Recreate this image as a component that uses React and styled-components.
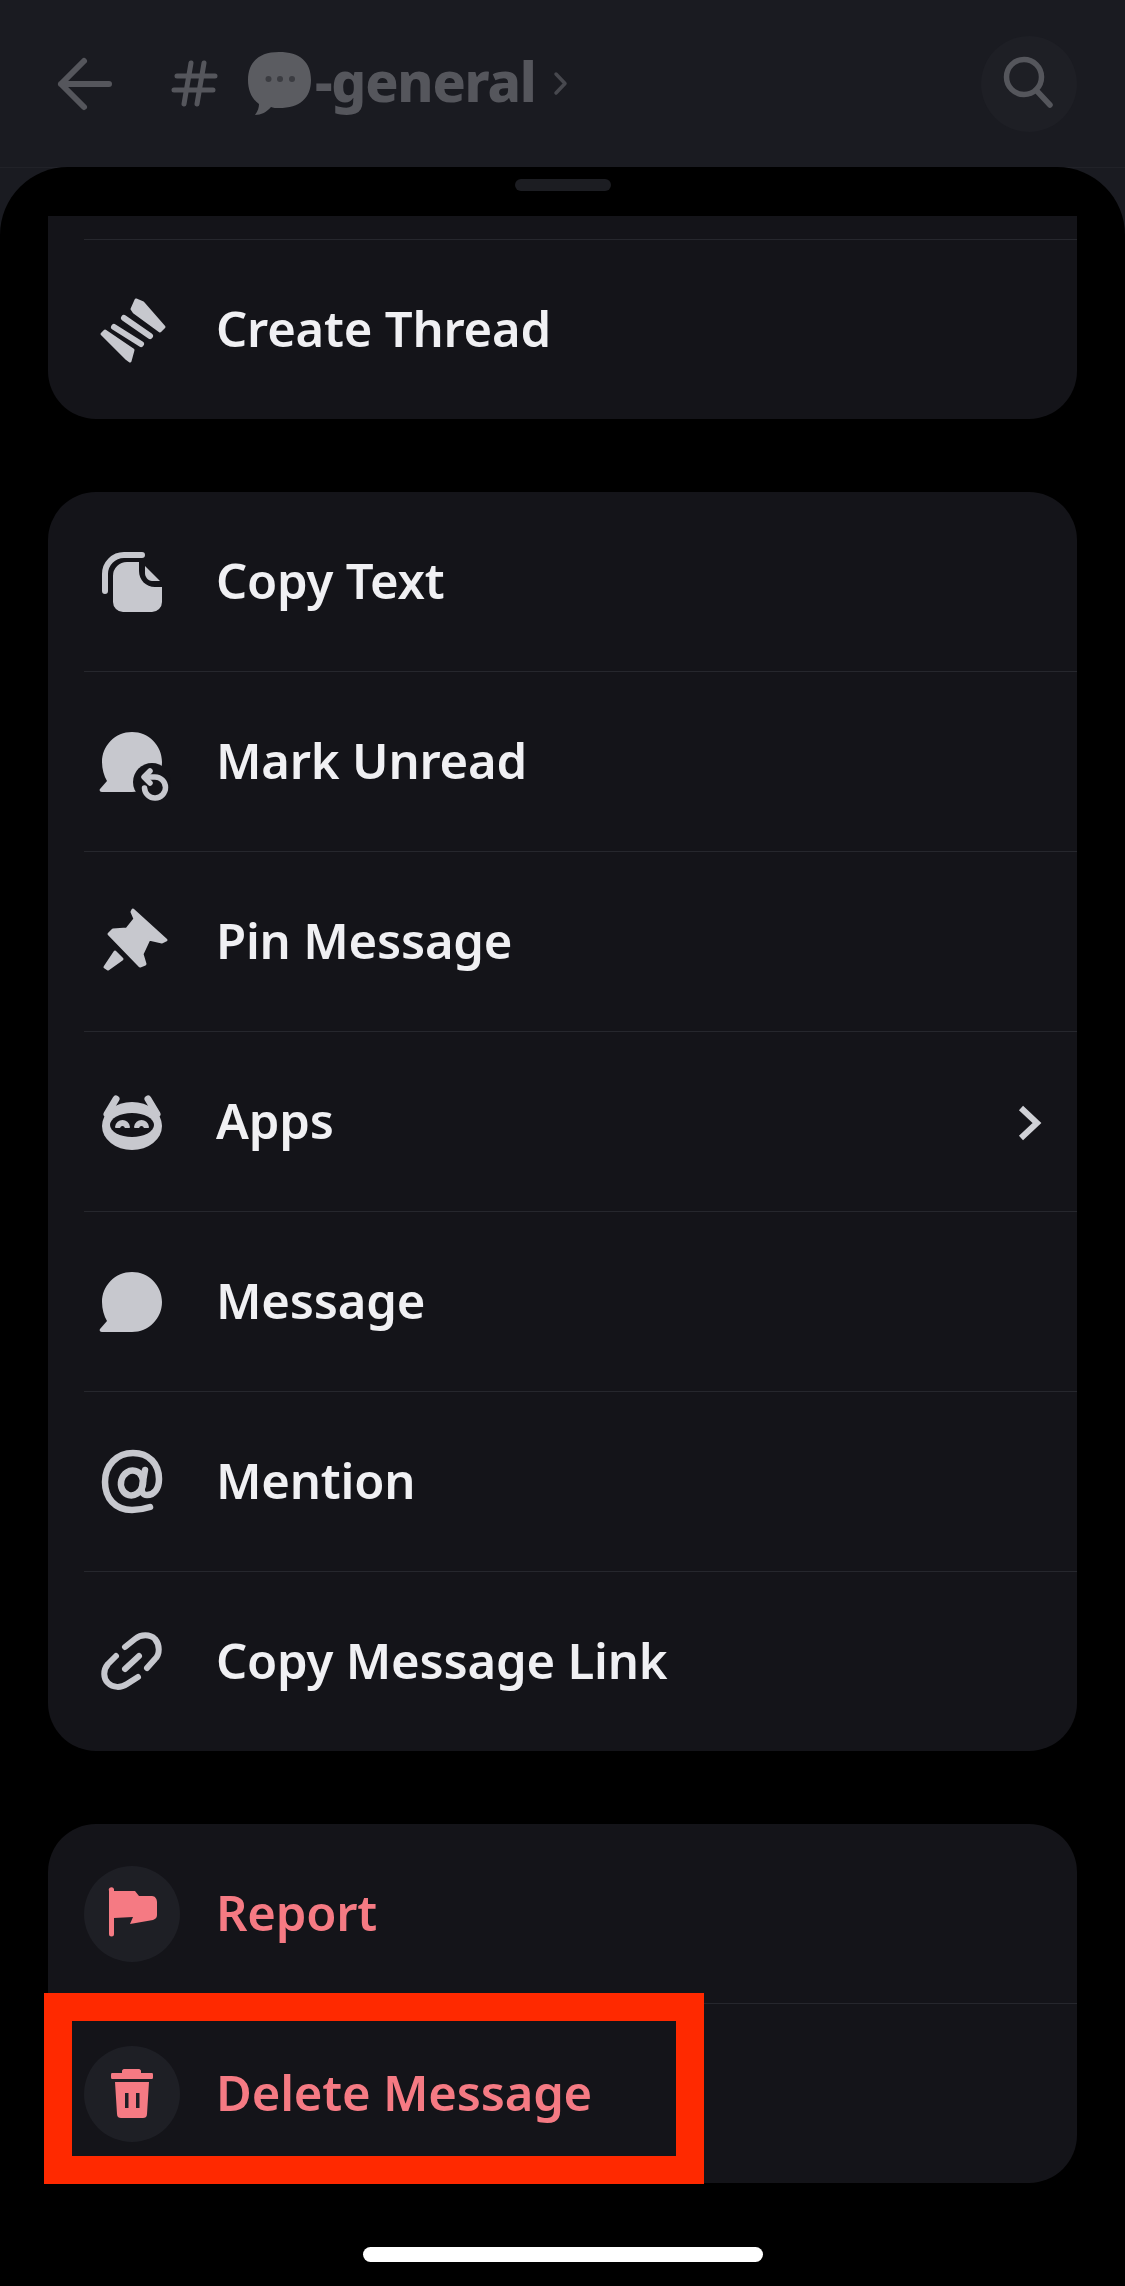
import React from "react";
import styled, { createGlobalStyle } from "styled-components";

const CARD = "#141419";
const ICON = "#c7c8ce";
const DANGER = "#f57a83";
const MUTED = "#55565c";

const Global = createGlobalStyle`
  html, body { margin: 0; padding: 0; background: #1a1b21; }
  #root { width: 1125px; height: 2286px; overflow: hidden; }
`;

const Page = styled.div`
  width: 1125px;
  height: 2286px;
  display: flex;
  flex-direction: column;
  background: #1a1b21;
  font-family: "Noto Sans", "Open Sans", sans-serif;
`;

const Header = styled.header`
  height: 168px;
  flex: none;
  box-sizing: border-box;
  display: flex;
  align-items: center;
  padding: 0 48px 0 58px;
  border-bottom: 1px solid #212228;
`;

const ChannelName = styled.span`
  margin-left: 4px;
  font-size: 55px;
  font-weight: 800;
  line-height: 1;
  letter-spacing: -1.2px;
  color: ${MUTED};
  position: relative;
  top: -3px;
`;

const HeaderGlyph = styled.svg`
  flex: none;
  display: block;
  overflow: visible;
  margin-left: ${(p) => p.$left || 0}px;
`;

const SearchButton = styled.div`
  margin-left: auto;
  width: 96px;
  height: 96px;
  border-radius: 50%;
  background: #1e1f25;
  display: flex;
  align-items: center;
  justify-content: center;
`;

const Sheet = styled.section`
  flex: 1;
  margin-top: -1px;
  background: #000;
  border-radius: 68px 68px 0 0;
  padding: 12px 48px 0;
  display: flex;
  flex-direction: column;
`;

const Handle = styled.div`
  flex: none;
  width: 96px;
  height: 12px;
  border-radius: 6px;
  background: #1c1d22;
  align-self: center;
  margin-bottom: 25px;
`;

const Cards = styled.div`
  display: flex;
  flex-direction: column;
  gap: 73px;
`;

const Card = styled.div`
  background: ${CARD};
  border-radius: ${(p) => (p.$clipped ? "0 0 48px 48px" : "48px")};
  padding-top: ${(p) => (p.$clipped ? "23px" : "0")};
`;

const Divider = styled.div`
  height: 1px;
  margin-left: 36px;
  background: #26272d;
`;

const Row = styled.div`
  position: relative;
  height: 179px;
  display: flex;
  align-items: center;
  padding: 0 37px 0 36px;
`;

const IconSlot = styled.div`
  flex: none;
  width: 96px;
  height: 96px;
  border-radius: 50%;
  display: flex;
  align-items: center;
  justify-content: center;
  background: ${(p) => (p.$danger ? "#1e1f25" : "transparent")};
`;

const Glyph = styled.svg`
  display: block;
  overflow: visible;
`;

const Label = styled.span`
  margin: -3px 0 0 36px;
  font-size: 49px;
  font-weight: 600;
  line-height: 1;
  letter-spacing: -0.2px;
  color: ${(p) => (p.$danger ? DANGER : "#f0f0f3")};
`;

const Chevron = styled.svg`
  margin: 2px 0 0 auto;
  display: block;
  overflow: visible;
`;

const Highlight = styled.div`
  position: absolute;
  left: -4px;
  top: -11px;
  width: 660px;
  height: 191px;
  box-sizing: border-box;
  border: 28px solid #ff2900;
  pointer-events: none;
`;

const HomeBar = styled.div`
  flex: none;
  align-self: center;
  width: 400px;
  height: 15px;
  border-radius: 8px;
  background: #fff;
  margin-top: 64px;
`;

const Icon60 = ({ children }) => (
  <Glyph width="60" height="60" viewBox="0 0 60 60" fill={ICON}>
    {children}
  </Glyph>
);

const BUBBLE =
  "M30 0C46.6 0 60 13.4 60 30C60 46.6 46.6 60 30 60H0C-2 60-3 58-2 57L5 49C2 44 0 37 0 30C0 13.4 13.4 0 30 0Z";

const ThreadIcon = () => (
  <Icon60>
    <g stroke={ICON} strokeLinejoin="round" strokeLinecap="round">
      <path strokeWidth="3" d="M34 0L30 9L32 12L58 31L62 27L41 3Z" />
      <path strokeWidth="3" d="M0 34L3 31L31 50L28 61L24 58Z" />
      <path strokeWidth="6" d="M22 18L48 36" />
      <path strokeWidth="6" d="M12 27L39 44" />
    </g>
  </Icon60>
);

const CopyIcon = () => (
  <Icon60>
    <path d="M3 39V22A19 19 0 0 1 22 3H40" fill="none" stroke={ICON} strokeWidth="6" strokeLinecap="round" />
    <path d="M11 24A14 14 0 0 1 25 10H37V19C37 28 44 35 53 35H60V50A10 10 0 0 1 50 60H21A10 10 0 0 1 11 50Z" />
    <path d="M43 14L58 29H50C46 29 43 25 43 21Z" />
  </Icon60>
);

const UnreadIcon = () => (
  <Icon60>
    <path d={BUBBLE} />
    <circle cx="50" cy="50" r="19" fill={CARD} />
    <g fill="none" stroke={ICON} strokeWidth="5.5" strokeLinecap="round" strokeLinejoin="round">
      <path d="M43 45H53A10.5 10.5 0 1 1 42.5 56" />
      <path d="M48 39L42 45L48 51" />
    </g>
  </Icon60>
);

const PinIcon = () => (
  <Icon60>
    <g stroke={ICON} strokeWidth="3" strokeLinejoin="round">
      <path d="M31-2L64 28L60 30L47 27L40 42L43 52L38 54L7 22L11 18L25 17L33 7L30 0Z" />
      <path d="M13 40L20 47L6 57L3 55Z" />
    </g>
  </Icon60>
);

const AppsIcon = () => (
  <Icon60>
    <path d="M5 22L14 7M55 22L46 7" stroke={ICON} strokeWidth="7" strokeLinecap="round" fill="none" />
    <ellipse cx="30" cy="34" rx="30" ry="24" />
    <ellipse cx="30" cy="33" rx="22" ry="12" fill={CARD} />
    <path d="M14 35C15 27 26 27 27 35ZM33 35C34 27 45 27 46 35Z" stroke={ICON} strokeWidth="2" strokeLinejoin="round" />
    <path d="M18 37C18 33 23 33 23 37ZM37 37C37 33 42 33 42 37Z" fill={CARD} />
  </Icon60>
);

const MessageIcon = () => (
  <Icon60>
    <path d={BUBBLE} />
  </Icon60>
);

const MentionIcon = () => (
  <Icon60>
    <g fill="none" stroke={ICON} strokeWidth="6.5" strokeLinecap="round" strokeLinejoin="round">
      <path d="M48 55C42 57 36 58 30 58C13 58 3 46 3 30C3 13 15 1 31 1C47 1 57 12 57 27C57 37 52 43 45 43C41 43 39 40 40 35L43 18" />
      <ellipse cx="30" cy="31" rx="11" ry="12.5" transform="rotate(15 30 31)" />
    </g>
  </Icon60>
);

const LinkIcon = () => (
  <Icon60>
    <g fill="none" stroke={ICON} strokeWidth="6" strokeLinecap="round" strokeLinejoin="round">
      <path d="M23 15L33 7C39 2 48 2 53 7C58 13 58 22 53 27L45 36" />
      <path d="M14 24L6 32C1 38 1 46 6 51C11 56 19 56 25 52L36 45" />
      <path d="M23 37L37 24" />
    </g>
  </Icon60>
);

const FlagIcon = () => (
  <Glyph width="96" height="96" viewBox="0 0 96 96" fill={DANGER}>
    <path d="M30 23A2.5 2.5 0 0 0 25 25V68A2.5 2.5 0 0 0 30 68V52L49 51L46 58L69 54C72 53 73 51 73 49V36C73 33 71 30 68 30H55L51 25H30Z" />
  </Glyph>
);

const TrashIcon = () => (
  <Glyph width="96" height="96" viewBox="0 0 96 96" fill={DANGER}>
    <path d="M38 27V25C38 24 39 23 40 23H55C56 23 57 24 57 25V27H68C69 27 69 28 69 30C69 32 69 33 68 33H28C27 33 27 32 27 30C27 28 27 27 28 27Z" />
    <path fillRule="evenodd" d="M31 36H65L63 68C63 71 61 72 59 72H37C35 72 33 71 33 68ZM41 47V62H44.5V47ZM52 47V62H55.5V47Z" />
  </Glyph>
);

const menu = [
  { label: "Copy Text", Icon: CopyIcon },
  { label: "Mark Unread", Icon: UnreadIcon },
  { label: "Pin Message", Icon: PinIcon },
  { label: "Apps", Icon: AppsIcon, more: true },
  { label: "Message", Icon: MessageIcon },
  { label: "Mention", Icon: MentionIcon },
  { label: "Copy Message Link", Icon: LinkIcon },
];

const MenuRow = ({ label, Icon, more, danger, children }) => (
  <Row>
    <IconSlot $danger={danger}>
      <Icon />
    </IconSlot>
    <Label $danger={danger}>{label}</Label>
    {more && (
      <Chevron width="20" height="32" viewBox="0 0 20 32" fill="none" stroke="#d0d1d6" strokeWidth="6">
        <path d="M1 1L17 16L1 31" />
      </Chevron>
    )}
    {children}
  </Row>
);

export default function App() {
  return (
    <Page>
      <Global />
      <Header>
        <HeaderGlyph width="54" height="52" viewBox="0 0 54 52" fill="none" stroke={MUTED} strokeWidth="6" strokeLinecap="round" strokeLinejoin="round">
          <path d="M51 26H3M26 3L3 26L26 49" />
        </HeaderGlyph>
        <HeaderGlyph $left={60} width="45" height="45" viewBox="0 0 45 45" fill="none" stroke={MUTED} strokeWidth="5" strokeLinecap="round">
          <path d="M19 2L12 43M32 2L25 43M5 15H43M2 29H41" />
        </HeaderGlyph>
        <HeaderGlyph $left={31} width="63" height="63" viewBox="0 0 63 63">
          <path d="M31 0C52 0 63 10 63 28C63 46 52 56 31 56C28 56 25 56 23 55C19 60 13 63 7 63C10 59 11 55 11 52C4 47 0 39 0 28C0 10 11 0 31 0Z" fill="#5b5c61" />
          <circle cx="20.5" cy="27" r="3" fill="#3b3c41" />
          <circle cx="32" cy="27" r="3" fill="#3b3c41" />
          <circle cx="44" cy="27" r="3" fill="#3b3c41" />
        </HeaderGlyph>
        <ChannelName>-general</ChannelName>
        <HeaderGlyph $left={18} width="13" height="23" viewBox="0 0 13 23" fill="none" stroke="#47484e" strokeWidth="3.5" strokeLinecap="round" strokeLinejoin="round">
          <path d="M2 2L11 11.5L2 21" />
        </HeaderGlyph>
        <SearchButton>
          <Glyph width="96" height="96" viewBox="0 0 96 96" fill="none" stroke={MUTED} strokeWidth="5.5" strokeLinecap="round">
            <circle cx="43" cy="41" r="17.5" />
            <path d="M55 54L69 69" />
          </Glyph>
        </SearchButton>
      </Header>
      <Sheet>
        <Handle />
        <Cards>
          <Card $clipped>
            <Divider />
            <MenuRow label="Create Thread" Icon={ThreadIcon} />
          </Card>
          <Card>
            {menu.map((item, i) => (
              <React.Fragment key={item.label}>
                {i > 0 && <Divider />}
                <MenuRow {...item} />
              </React.Fragment>
            ))}
          </Card>
          <Card>
            <MenuRow label="Report" Icon={FlagIcon} danger />
            <Divider />
            <MenuRow label="Delete Message" Icon={TrashIcon} danger>
              <Highlight />
            </MenuRow>
          </Card>
        </Cards>
        <HomeBar />
      </Sheet>
    </Page>
  );
}
